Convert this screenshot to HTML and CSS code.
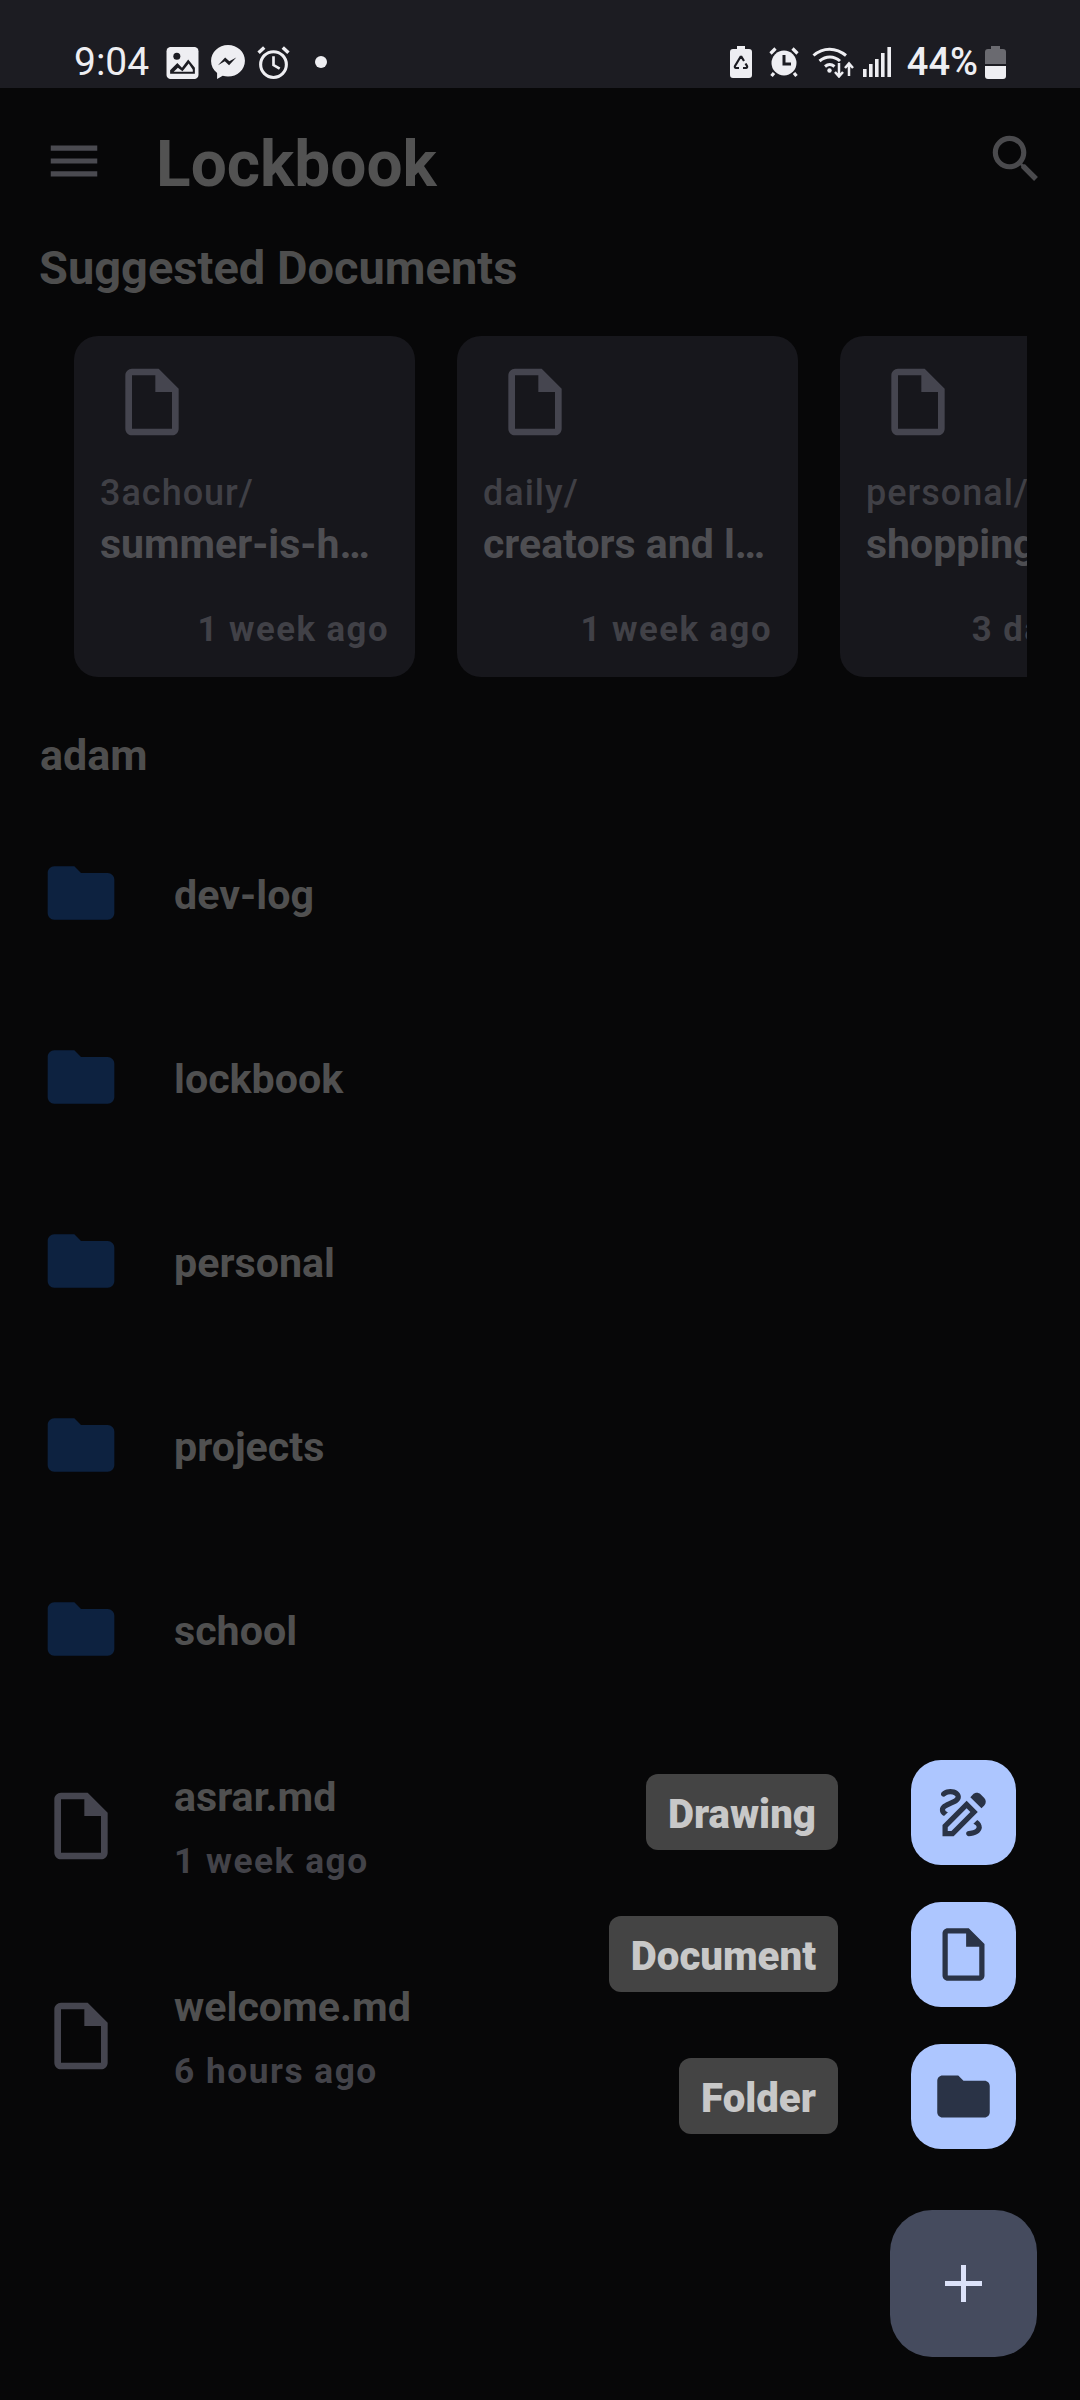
FILE: index.html
```html
<!DOCTYPE html>
<html lang="en">
<head>
    <meta charset="UTF-8">
    <meta name="viewport" content="width=device-width, initial-scale=1.0">
    <title>Lockbook</title>
    <link rel="stylesheet" href="styles.css">
</head>
<body>

    <svg class="defs" width="0" height="0">
        <symbol id="doc" viewBox="0 0 24 24"><path d="M14 2H6c-1.1 0-2 .9-2 2v16c0 1.1.9 2 2 2h12c1.1 0 2-.9 2-2V8l-6-6zM6 20V4h7v5h5v11H6z"/></symbol>
        <symbol id="folder" viewBox="0 0 24 24"><path d="M10 4H4c-1.1 0-1.99.9-1.99 2L2 18c0 1.1.9 2 2 2h16c1.1 0 2-.9 2-2V8c0-1.1-.9-2-2-2h-8l-2-2z"/></symbol>
    </svg>

    <div class="statusbar">
        <div class="status-left">
            <span class="time">9:04</span>
            <svg class="st-icon st-image" width="33" height="33" viewBox="0 0 31 32"><rect y="1" width="31" height="31" rx="4" fill="#eeeef2"/><circle cx="10" cy="10" r="3.400" fill="#1c1c22"/><path d="M3.500 27v-3.500l7-7 4.500 4.500 6-8 6.500 8V27z" fill="#1c1c22"/><path d="M7 25l4-4 4.500 3.500 6-7.500 4 6v2z" fill="#eeeef2"/></svg>
            <svg class="st-icon" width="34" height="36" viewBox="0 0 32 34"><path d="M16 1C7.200 1 0 7.700 0 16c0 4.600 2.100 8.500 5.700 11.300V33l5.300-3c1.600.5 3.300.8 5 .8 8.800 0 16-6.700 16-15S24.800 1 16 1z" fill="#eeeef2"/><path d="M6.500 20l6.800-7.200 4 3.600 6.500-3.600-6.800 7.200-4-3.600z" fill="#1c1c22"/></svg>
            <svg class="st-icon" width="33" height="35" viewBox="0 0 32 34"><circle cx="16" cy="19" r="12.500" fill="none" stroke="#eeeef2" stroke-width="3"/><path d="M16 11v8.500l6 3.500" fill="none" stroke="#eeeef2" stroke-width="2.600"/><path d="M1.500 7.500L7 2.500M30.500 7.500L25 2.500" stroke="#eeeef2" stroke-width="3.400"/></svg>
            <span class="dot"></span>
        </div>
        <div class="status-right">
            <svg class="st-icon" width="22" height="32" viewBox="0 0 22 32"><path d="M7 0h8v3h4c2 0 3 1 3 3v23c0 2-1 3-3 3H3c-2 0-3-1-3-3V6c0-2 1-3 3-3h4z" fill="#eeeef2"/><path d="M11 10l3 5M8 15l-3 5c-.5 1 0 2 1 2h3M13 22h3c1 0 1.500-1 1-2l-1.500-2.500M11 10L8 15" fill="none" stroke="#1c1c22" stroke-width="2.200"/></svg>
            <svg class="st-icon st-alarm" width="30" height="32" viewBox="0 0 30 32"><circle cx="15" cy="17" r="12.500" fill="#eeeef2"/><path d="M15 9v9h7" fill="none" stroke="#1c1c22" stroke-width="3"/><path d="M1.500 7.500L6.500 2.500M28.500 7.500L23.500 2.500M5 27l-2.500 3M25 27l2.500 3" stroke="#eeeef2" stroke-width="3.200"/></svg>
            <svg class="st-icon wifi" width="42" height="32" viewBox="0 0 42 32"><path d="M1.500 9.500C11 1 24 1 34 9.500M7.500 15C14 9.500 22 9.500 28 15M13 20.500c3-2.600 6.500-2.600 9.500 0" fill="none" stroke="#eeeef2" stroke-width="3"/><circle cx="17.500" cy="24.500" r="2.200" fill="#eeeef2"/><path d="M27 17v13M23 26l4 4.500 4-4.500M37 30V18M33 22l4-4.500 4 4.500" fill="none" stroke="#eeeef2" stroke-width="2.500"/></svg>
            <svg class="st-icon signal" width="28" height="30" viewBox="0 0 28 30"><path d="M0 22h3.600v8H0zM6 17h3.600v13H6zM12 12h3.600v18H12zM18 6h3.600v24H18zM24.400 0H28v30h-3.600z" fill="#eeeef2"/></svg>
            <span class="battery-text">44%</span>
            <svg class="st-icon battery" width="21" height="33" viewBox="0 0 21 33"><path d="M6 0h9v3h3c2 0 3 1 3 3v12H0V6c0-2 1-3 3-3h3z" fill="#6a6a70"/><path d="M0 20h21v10c0 2-1 3-3 3H3c-2 0-3-1-3-3z" fill="#eeeef2"/></svg>
        </div>
    </div>

    <div class="topbar">
        <svg class="menu-icon" width="62" height="62" viewBox="0 0 24 24"><path d="M3 18h18v-2H3v2zm0-5h18v-2H3v2zm0-7v2h18V6H3z"/></svg>
        <h1 class="app-title">Lockbook</h1>
        <svg class="search-icon" width="62" height="62" viewBox="0 0 24 24"><path d="M15.500 14h-.79l-.28-.27C15.410 12.590 16 11.110 16 9.500 16 5.910 13.090 3 9.500 3S3 5.910 3 9.500 5.910 16 9.500 16c1.610 0 3.090-.59 4.230-1.570l.27.28v.79l5 4.990L20.490 19l-4.990-5zm-6 0C7.010 14 5 11.990 5 9.500S7.010 5 9.500 5 14 7.010 14 9.500 11.990 14 9.500 14z"/></svg>
    </div>

    <h2 class="section-title">Suggested Documents</h2>

    <div class="suggested">
        <div class="card">
            <svg class="card-icon"><use href="#doc"/></svg>
            <div class="card-path">3achour/</div>
            <div class="card-name">summer-is-h…</div>
            <div class="card-date">1 week ago</div>
        </div>
        <div class="card">
            <svg class="card-icon"><use href="#doc"/></svg>
            <div class="card-path">daily/</div>
            <div class="card-name">creators and l…</div>
            <div class="card-date">1 week ago</div>
        </div>
        <div class="card">
            <svg class="card-icon"><use href="#doc"/></svg>
            <div class="card-path">personal/</div>
            <div class="card-name">shopping-list</div>
            <div class="card-date">3 days ago</div>
        </div>
    </div>

    <h3 class="parent-name">adam</h3>

    <div class="files">
        <div class="row folder-row">
            <svg class="row-icon folder-icon"><use href="#folder"/></svg>
            <div class="row-name">dev-log</div>
        </div>
        <div class="row folder-row">
            <svg class="row-icon folder-icon"><use href="#folder"/></svg>
            <div class="row-name">lockbook</div>
        </div>
        <div class="row folder-row">
            <svg class="row-icon folder-icon"><use href="#folder"/></svg>
            <div class="row-name">personal</div>
        </div>
        <div class="row folder-row">
            <svg class="row-icon folder-icon"><use href="#folder"/></svg>
            <div class="row-name">projects</div>
        </div>
        <div class="row folder-row">
            <svg class="row-icon folder-icon"><use href="#folder"/></svg>
            <div class="row-name">school</div>
        </div>
        <div class="row file-row">
            <svg class="row-icon file-icon"><use href="#doc"/></svg>
            <div class="file-text">
                <div class="row-name">asrar.md</div>
                <div class="row-date">1 week ago</div>
            </div>
        </div>
        <div class="row file-row">
            <svg class="row-icon file-icon"><use href="#doc"/></svg>
            <div class="file-text">
                <div class="row-name">welcome.md</div>
                <div class="row-date">6 hours ago</div>
            </div>
        </div>
    </div>

    <div class="fab-menu">
        <div class="fab-item">
            <span class="fab-label">Drawing</span>
            <button class="fab-small">
                <svg width="63" height="63" viewBox="0 0 24 24"><path d="M18.850 10.390l1.060-1.060c.78-.78.78-2.050 0-2.830L18.500 5.090c-.78-.78-2.050-.78-2.830 0l-1.060 1.060 4.240 4.240zM14.610 11.810L7.410 19H6v-1.410l7.190-7.190 1.420 1.410zM13.190 7.560L4 16.760V21h4.240l9.190-9.190-4.240-4.250zM19 17.500c0 2.190-2.540 3.500-5 3.500-.55 0-1-.45-1-1s.45-1 1-1c1.540 0 3-.73 3-1.500 0-.47-.48-.87-1.230-1.200l1.480-1.480c1.070.63 1.750 1.640 1.750 3.180zM4.580 13.350C3.610 12.790 3 12.060 3 11c0-1.800 1.890-2.630 3.560-3.360C7.590 7.180 9 6.560 9 6c0-.41-.78-1-2-1-1.260 0-1.800.61-1.830.64-.35.41-.98.46-1.400.12-.41-.34-.49-.95-.15-1.380C3.730 4.240 4.760 3 7 3c2.240 0 4 1.320 4 3 0 1.870-1.930 2.720-3.640 3.470C6.420 9.880 5 10.500 5 11c0 .31.43.6 1.070.86l-1.490 1.490z"/></svg>
            </button>
        </div>
        <div class="fab-item">
            <span class="fab-label">Document</span>
            <button class="fab-small"><svg width="63" height="63"><use href="#doc"/></svg></button>
        </div>
        <div class="fab-item">
            <span class="fab-label">Folder</span>
            <button class="fab-small"><svg width="63" height="63"><use href="#folder"/></svg></button>
        </div>
        <button class="fab-main">
            <svg width="37" height="37" viewBox="0 0 37 37"><path d="M16 0h5v16h16v5H21v16h-5V21H0v-5h16z"/></svg>
        </button>
    </div>

</body>
</html>
```

FILE: styles.css
```css
* {
    margin: 0;
    padding: 0;
    box-sizing: border-box;
}
body {
    position: relative;
    width: 1080px;
    height: 2400px;
    overflow: hidden;
    font-family: Roboto, "Noto Sans", sans-serif;
    background-color: #070708;
    color: #505050;
}
.defs {
    position: absolute;
}
.statusbar {
    height: 88px;
    padding: 45px 74px 0 74px;
    display: flex;
    justify-content: space-between;
    align-items: flex-start;
    background: #1c1c22;
    color: #eeeef2;
}
.status-left, .status-right {
    height: 34px;
    display: flex;
    align-items: center;
}
.status-left .st-icon {
    margin-left: 12px;
}
.status-left .st-image {
    margin-left: 17px;
}
.time {
    font-size: 39px;
    line-height: 34px;
}
.dot {
    width: 12px;
    height: 12px;
    margin-left: 25px;
    border-radius: 50%;
    background: #eeeef2;
}
.status-right .st-icon {
    margin-right: 17px;
}
.status-right .st-alarm {
    margin-right: 13px;
}
.status-right .wifi {
    margin-right: 9px;
}
.status-right .signal {
    margin-right: 16px;
}
.status-right .battery {
    margin-right: 0;
}
.battery-text {
    font-size: 38px;
    font-weight: 500;
    line-height: 34px;
    margin-right: 7px;
}
.topbar {
    height: 146px;
    display: flex;
    align-items: center;
    padding: 0 33px 0 43px;
}
.menu-icon {
    fill: #4a4a50;
}
.search-icon {
    fill: #4a4a4d;
    margin-left: auto;
    margin-bottom: 4px;
}
.app-title {
    margin: 7px 0 0 51px;
    font-size: 64px;
    font-weight: 700;
    line-height: 72px;
    color: #525252;
}
.section-title {
    margin: 7px 0 0 39px;
    font-size: 47px;
    font-weight: 700;
    line-height: 54px;
    color: #4e4e4e;
}
.suggested {
    width: 953px;
    margin: 41px 0 0 74px;
    display: flex;
    gap: 42px;
    overflow: hidden;
}
.card {
    flex: none;
    width: 341px;
    height: 341px;
    padding: 26px 26px 0;
    border-radius: 24px;
    background: #17171c;
}
.card-icon {
    display: block;
    width: 80px;
    height: 80px;
    margin-left: 12px;
    fill: #45454f;
}
.card-path {
    margin-top: 29px;
    font-size: 36px;
    font-weight: 500;
    line-height: 44px;
    letter-spacing: 1px;
    color: #404046;
    white-space: nowrap;
}
.card-name {
    margin-top: 7px;
    font-size: 41px;
    font-weight: 700;
    line-height: 44px;
    color: #4e4e52;
    white-space: nowrap;
}
.card-date {
    margin-top: 41px;
    font-size: 34.700px;
    font-weight: 700;
    line-height: 44px;
    letter-spacing: 1.500px;
    color: #414147;
    text-align: right;
    white-space: nowrap;
}
.parent-name {
    margin: 53px 0 0 40px;
    font-size: 43px;
    font-weight: 700;
    line-height: 50px;
    color: #4e4e4e;
}
.files {
    margin-top: 20px;
}
.row {
    display: flex;
    align-items: center;
    padding-left: 41px;
}
.folder-row {
    height: 184px;
}
.folder-row .row-name {
    margin-top: 6px;
}
.file-row {
    height: 210px;
}
.file-text {
    padding-top: 8px;
}
.row-icon {
    flex: none;
    width: 80px;
    height: 80px;
    margin-right: 53px;
    margin-top: 2px;
}
.folder-icon {
    fill: #0d2240;
}
.file-icon {
    fill: #45454f;
}
.row-name {
    font-size: 41.200px;
    font-weight: 700;
    line-height: 50px;
}
.row-date {
    margin-top: 14px;
    font-size: 35.300px;
    font-weight: 700;
    line-height: 50px;
    letter-spacing: 1.500px;
    color: #434349;
}
/* speed dial sits over the list */
.fab-menu {
    position: absolute;
    right: 43px;
    bottom: 43px;
    display: flex;
    flex-direction: column;
    align-items: flex-end;
}
.fab-item {
    display: flex;
    align-items: center;
    gap: 73px;
    margin: 0 21px 37px 0;
}
.fab-label {
    padding: 3px 22px 0;
    height: 76px;
    margin-bottom: 2px;
    line-height: 76px;
    font-size: 40.200px;
    font-weight: 900;
    border-radius: 12px;
    background: #444444;
    color: #c8c8c8;
}
.fab-small {
    width: 105px;
    height: 105px;
    display: flex;
    align-items: center;
    justify-content: center;
    border: none;
    border-radius: 30px;
    background: #adc6ff;
    fill: #2a3346;
}
.fab-main {
    width: 147px;
    height: 147px;
    margin-top: 24px;
    display: flex;
    align-items: center;
    justify-content: center;
    border: none;
    border-radius: 42px;
    background: #454b5e;
    fill: #dce2f9;
}
```
